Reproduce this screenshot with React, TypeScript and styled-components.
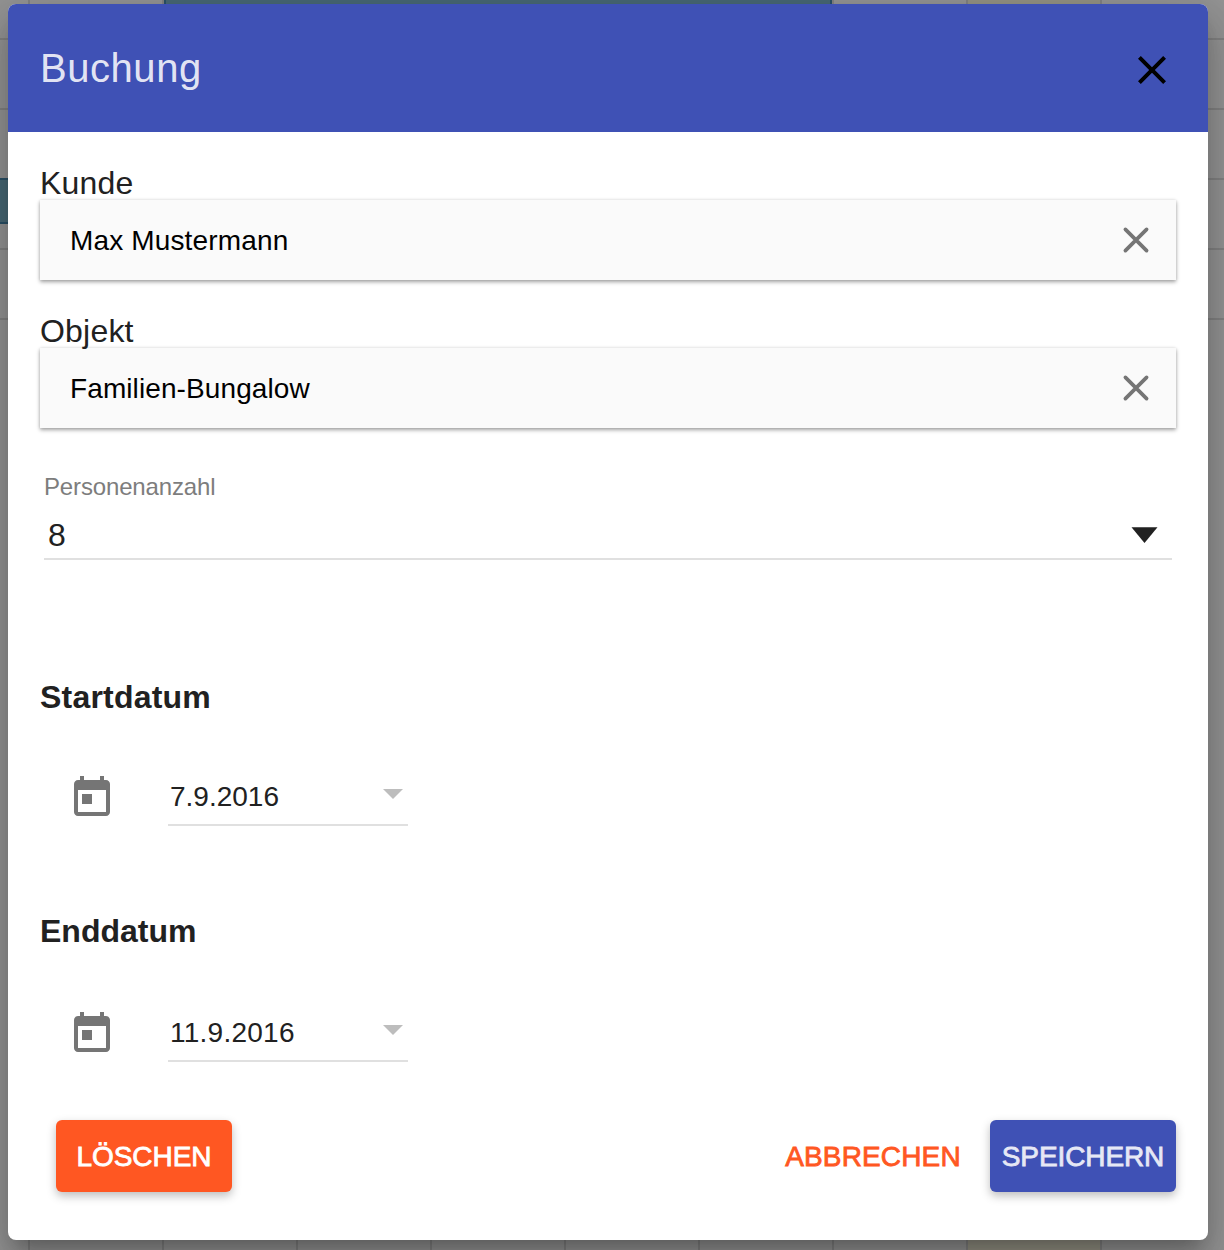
import React from "react";
import styled, { createGlobalStyle } from "styled-components";

const GlobalStyle = createGlobalStyle`
  *, *::before, *::after { box-sizing: border-box; }
  body {
    margin: 0;
    overflow: hidden;
    background: #949494;
    font-family: "Liberation Sans", Arial, Helvetica, sans-serif;
    color: #212121;
  }
`;

const Page = styled.div`
  display: grid;
  grid-template: 1250px / 1224px;
  overflow: hidden;
`;

const Calendar = styled.div`
  grid-area: 1 / 1;
  display: flex;
  flex-direction: column;
`;

const Week = styled.div<{ $height: number; $line?: boolean }>`
  display: grid;
  grid-template-columns: 30px repeat(8, 134px) 122px;
  height: ${(p) => p.$height}px;
  border-bottom: ${(p) => (p.$line ? "2px solid #828282" : "0")};
`;

const Day = styled.div<{ $index: number; $weekend?: boolean; $last?: boolean }>`
  grid-row: 1;
  grid-column: ${(p) => p.$index + 1};
  background: ${(p) => (p.$weekend ? "#949284" : "transparent")};
  border-right: ${(p) => (p.$last ? "0" : "2px solid #828282")};
`;

const Booking = styled.div`
  grid-row: 1;
  grid-column: 1 / 3;
  height: 46px;
  margin-top: -2px;
  background: #476875;
  border: solid #2a5167;
  border-width: 2px 2px 2px 0;
`;

const TopBooking = styled.div`
  grid-row: 1;
  grid-column: 3 / 8;
  height: 30px;
  margin-right: 2px;
  background: #476875;
  border: solid #2a5167;
  border-width: 0 2px 2px;
`;

const Dialog = styled.section`
  grid-area: 1 / 1;
  z-index: 1;
  margin: 4px 16px 10px 8px;
  display: flex;
  flex-direction: column;
  overflow: hidden;
  border-radius: 8px;
  background: #fff;
  box-shadow: 0 14px 16px -8px rgba(0, 0, 0, 0.2),
    0 26px 38px 4px rgba(0, 0, 0, 0.14), 0 10px 48px 8px rgba(0, 0, 0, 0.12);
`;

const Toolbar = styled.header`
  display: flex;
  align-items: center;
  justify-content: space-between;
  height: 128px;
  padding: 0 32px;
  background: #3f51b5;
`;

const Title = styled.h2`
  margin: 0;
  font-size: 40px;
  line-height: 48px;
  font-weight: 400;
  letter-spacing: 0.55px;
  color: rgba(255, 255, 255, 0.87);
`;

const IconButton = styled.button`
  display: flex;
  align-items: center;
  justify-content: center;
  width: 48px;
  height: 48px;
  margin-top: 4px;
  padding: 0;
  border: 0;
  background: none;
`;

const Content = styled.div`
  display: flex;
  flex-direction: column;
  padding: 34px 32px 0;
`;

const Field = styled.div`
  margin-bottom: 34px;
`;

const Label = styled.label`
  display: block;
  font-size: 32px;
  line-height: 34px;
  letter-spacing: 0.2px;
`;

const ChipInput = styled.div`
  display: flex;
  align-items: center;
  justify-content: space-between;
  height: 80px;
  padding: 0 26px 0 30px;
  background: #fafafa;
  box-shadow: 0 2px 4px rgba(0, 0, 0, 0.36), 0 0 3px rgba(0, 0, 0, 0.1);
  color: #000;
`;

const Value = styled.span<{ $size?: number; $spacing?: number; $drop?: number }>`
  padding-top: ${(p) => p.$drop ?? 0}px;
  font-size: ${(p) => p.$size ?? 28}px;
  line-height: 36px;
  letter-spacing: ${(p) => p.$spacing ?? 0}px;
`;

const Select = styled.div`
  margin: 10px 4px 0;
`;

const SelectLabel = styled.div`
  font-size: 24px;
  line-height: 30px;
  letter-spacing: -0.15px;
  color: #7d7d7d;
`;

const SelectValue = styled.div`
  display: flex;
  align-items: center;
  justify-content: space-between;
  height: 58px;
  padding: 10px 14px 0 4px;
  border-bottom: 2px solid #e0e0e0;
`;

const DateGroup = styled.div<{ $top: number }>`
  margin-top: ${(p) => p.$top}px;
`;

const DateHeading = styled.h3<{ $spacing: number }>`
  margin: 0;
  font-size: 32px;
  line-height: 40px;
  font-weight: 700;
  letter-spacing: ${(p) => p.$spacing}px;
`;

const DateRow = styled.div<{ $top: number }>`
  display: flex;
  align-items: flex-start;
  gap: 52px;
  height: 60px;
  margin-top: ${(p) => p.$top}px;
  padding-left: 28px;
`;

const CalendarGlyph = styled.svg`
  width: 48px;
  height: 48px;
  margin-top: 8px;
  fill: #757575;
`;

const DateInput = styled.div`
  display: flex;
  align-items: center;
  justify-content: space-between;
  width: 240px;
  height: 60px;
  padding: 0 5.5px 0 2px;
  border-bottom: 2px solid #e0e0e0;
`;

const Caret = styled.svg`
  display: block;
  flex: none;
  margin-bottom: 3px;
`;

const Actions = styled.footer`
  display: flex;
  align-items: center;
  margin-top: 58px;
  padding: 0 32px 0 48px;
`;

const Button = styled.button<{ $width: number; $bg?: string; $fg: string; $spacing: number }>`
  width: ${(p) => p.$width}px;
  height: 72px;
  padding: 1px 0 0;
  border: 0;
  border-radius: 6px;
  background: ${(p) => p.$bg ?? "transparent"};
  box-shadow: ${(p) => (p.$bg ? "0 4px 10px rgba(0, 0, 0, 0.26)" : "none")};
  color: ${(p) => p.$fg};
  font: 400 28px/36px "Liberation Sans", Arial, sans-serif;
  letter-spacing: ${(p) => p.$spacing}px;
  -webkit-text-stroke: 0.8px ${(p) => p.$fg};
  white-space: nowrap;
`;

const Spacer = styled.div<{ $width?: number }>`
  flex: ${(p) => (p.$width ? `0 0 ${p.$width}px` : "1")};
`;

function CloseIcon() {
  return (
    <svg width="48" height="48" viewBox="0 0 24 24">
      <path d="M19 6.41L17.59 5 12 10.59 6.41 5 5 6.41 10.59 12 5 17.59 6.41 19 12 13.41 17.59 19 19 17.59 13.41 12z" />
    </svg>
  );
}

function ClearIcon() {
  return (
    <svg width="28" height="28" viewBox="0 0 28 28">
      <path
        d="M3.4 3.4L24.6 24.6M24.6 3.4L3.4 24.6"
        stroke="#757575"
        strokeWidth="3.7"
        strokeLinecap="round"
        fill="none"
      />
    </svg>
  );
}

function Days() {
  return (
    <>
      {Array.from({ length: 10 }, (_, i) => (
        <Day key={i} $index={i} $weekend={i === 8} $last={i === 9} />
      ))}
    </>
  );
}

function ChipField({ label, value, spacing }: { label: string; value: string; spacing: number }) {
  return (
    <Field>
      <Label>{label}</Label>
      <ChipInput>
        <Value $spacing={spacing} $drop={2}>{value}</Value>
        <ClearIcon />
      </ChipInput>
    </Field>
  );
}

function DateField(p: { title: string; value: string; top: number; gap: number; spacing: number; titleSpacing: number }) {
  return (
    <DateGroup $top={p.top}>
      <DateHeading $spacing={p.titleSpacing}>{p.title}</DateHeading>
      <DateRow $top={p.gap}>
        <CalendarGlyph viewBox="0 0 24 24">
          <path d="M19 3h-1V1h-2v2H8V1H6v2H5c-1.11 0-1.99.9-1.99 2L3 19c0 1.1.89 2 2 2h14c1.1 0 2-.9 2-2V5c0-1.1-.9-2-2-2zm0 16H5V8h14v11zM7 10h5v5H7z" />
        </CalendarGlyph>
        <DateInput>
          <Value $spacing={p.spacing} $drop={3}>{p.value}</Value>
          <Caret width="20" height="10" viewBox="0 0 20 10">
            <path d="M0 0H20L10 10Z" fill="#bdbdbd" />
          </Caret>
        </DateInput>
      </DateRow>
    </DateGroup>
  );
}

export default function App() {
  return (
    <>
      <GlobalStyle />
      <Page>
        <Calendar>
          <Week $height={40} $line>
            <Days />
            <TopBooking />
          </Week>
          <Week $height={70} $line />
          <Week $height={70} $line />
          <Week $height={70} $line>
            <Booking />
          </Week>
          <Week $height={70} $line />
          <Week $height={900} />
          <Week $height={30}>
            <Days />
          </Week>
        </Calendar>
        <Dialog>
          <Toolbar>
            <Title>Buchung</Title>
            <IconButton aria-label="Schließen">
              <CloseIcon />
            </IconButton>
          </Toolbar>
          <Content>
            <ChipField label="Kunde" value="Max Mustermann" spacing={0.15} />
            <ChipField label="Objekt" value="Familien-Bungalow" spacing={0.1} />
            <Select>
              <SelectLabel>Personenanzahl</SelectLabel>
              <SelectValue>
                <Value $size={32}>8</Value>
                <svg width="27" height="16" viewBox="0 0 27 16">
                  <path d="M0.5 0.3H26.5L13.5 16Z" fill="#212121" />
                </svg>
              </SelectValue>
            </Select>
            <DateField title="Startdatum" value="7.9.2016" top={117} gap={49} spacing={0} titleSpacing={0.2} />
            <DateField title="Enddatum" value="11.9.2016" top={85} gap={51} spacing={0.25} titleSpacing={0} />
          </Content>
          <Actions>
            <Button $width={176} $bg="#ff5722" $fg="#ffffff" $spacing={-0.05}>LÖSCHEN</Button>
            <Spacer />
            <Button $width={206} $fg="#ff5722" $spacing={0.15}>ABBRECHEN</Button>
            <Spacer $width={14} />
            <Button $width={186} $bg="#3f51b5" $fg="#e6e8f5" $spacing={-0.1}>SPEICHERN</Button>
          </Actions>
        </Dialog>
      </Page>
    </>
  );
}
